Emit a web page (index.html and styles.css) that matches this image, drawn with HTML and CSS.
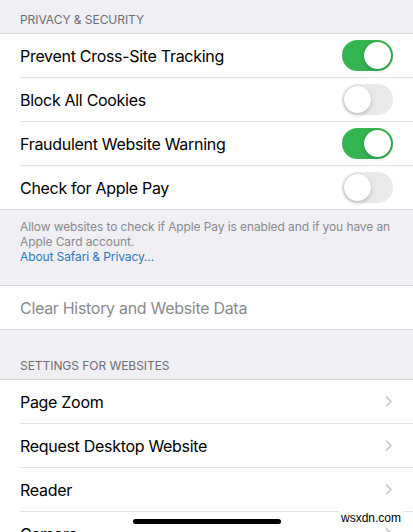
FILE: index.html
```html
<!DOCTYPE html>
<html lang="en">
<head>
<meta charset="utf-8">
<title>Safari Settings</title>
<link rel="stylesheet" href="styles.css">
</head>
<body>
<div class="screen">
  <div class="section-header first">PRIVACY &amp; SECURITY</div>
  <div class="group">
    <div class="row"><span class="label">Prevent Cross-Site Tracking</span><span class="toggle on"><span class="knob"></span></span></div>
    <div class="row"><span class="label">Block All Cookies</span><span class="toggle"><span class="knob"></span></span></div>
    <div class="row"><span class="label">Fraudulent Website Warning</span><span class="toggle on"><span class="knob"></span></span></div>
    <div class="row"><span class="label">Check for Apple Pay</span><span class="toggle"><span class="knob"></span></span></div>
  </div>
  <div class="section-footer">Allow websites to check if Apple Pay is enabled and if you have an Apple Card account.<br><span class="link">About Safari &amp; Privacy…</span></div>

  <div class="group">
    <div class="row"><span class="label disabled">Clear History and Website Data</span></div>
  </div>

  <div class="section-header">SETTINGS FOR WEBSITES</div>
  <div class="group">
    <div class="row"><span class="label">Page Zoom</span><svg class="chevron" viewBox="0 0 8 13" width="8" height="13"><path d="M1.5 2 L6 6.5 L1.5 11" fill="none" stroke="#c4c4c7" stroke-width="1.6" stroke-linecap="round" stroke-linejoin="round"/></svg></div>
    <div class="row"><span class="label">Request Desktop Website</span><svg class="chevron" viewBox="0 0 8 13" width="8" height="13"><path d="M1.5 2 L6 6.5 L1.5 11" fill="none" stroke="#c4c4c7" stroke-width="1.6" stroke-linecap="round" stroke-linejoin="round"/></svg></div>
    <div class="row"><span class="label">Reader</span><svg class="chevron" viewBox="0 0 8 13" width="8" height="13"><path d="M1.5 2 L6 6.5 L1.5 11" fill="none" stroke="#c4c4c7" stroke-width="1.6" stroke-linecap="round" stroke-linejoin="round"/></svg></div>
    <div class="row"><span class="label">Camera</span><svg class="chevron" viewBox="0 0 8 13" width="8" height="13"><path d="M1.5 2 L6 6.5 L1.5 11" fill="none" stroke="#c4c4c7" stroke-width="1.6" stroke-linecap="round" stroke-linejoin="round"/></svg></div>
  </div>

  <div class="home-indicator"></div>
  <div class="watermark">wsxdn.com</div>
</div>
</body>
</html>
```

FILE: styles.css
```css
html, body {
  margin: 0;
  padding: 0;
  background: #efeff4;
}
body {
  font-family: Inter, "Liberation Sans", sans-serif;
  -webkit-font-smoothing: antialiased;
}
.screen {
  width: 413px;
  height: 532px;
  overflow: hidden;
  position: relative;
  background: #efeff4;
}
.section-header {
  height: 20px;
  padding: 0 20px;
  font-size: 12px;
  line-height: 14px;
  color: #6d6d72;
  letter-spacing: -0.05px;
  padding-top: 29px;
  box-sizing: content-box;
}
.section-header.first {
  padding-top: 13px;
}
.group {
  background: #fff;
  border-top: 1px solid #d9d9dd;
  border-bottom: 1px solid #d9d9dd;
}
.row {
  height: 43px;
  margin-left: 20px;
  padding-right: 20px;
  display: flex;
  align-items: center;
  justify-content: space-between;
  border-bottom: 1px solid #e2e2e5;
}
.row:last-child {
  border-bottom: none;
  height: 43px;
}
.label {
  font-size: 16px;
  color: #000;
  letter-spacing: -0.3px;
}
.label.disabled {
  color: #8a8a8e;
}
.toggle {
  width: 51px;
  height: 31px;
  border-radius: 16px;
  background: #e9e9eb;
  position: relative;
  flex: none;
}
.toggle.on {
  background: #35b552;
}
.knob {
  position: absolute;
  top: 2px;
  left: 2px;
  width: 27px;
  height: 27px;
  border-radius: 50%;
  background: #fff;
  box-shadow: 0 2px 4px rgba(0,0,0,0.18), 0 0 1px rgba(0,0,0,0.15);
}
.toggle.on .knob {
  left: 22px;
}
.chevron {
  flex: none;
  margin-right: 0;
}
.section-footer {
  padding: 9px 20px 21px;
  font-size: 12px;
  line-height: 15px;
  letter-spacing: -0.1px;
  color: #8a8a8e;
}
.link {
  color: #2d78bc;
}
.home-indicator {
  position: absolute;
  left: 133px;
  top: 519px;
  width: 148px;
  height: 5px;
  border-radius: 3px;
  background: #000;
}
.watermark {
  position: absolute;
  left: 339px;
  top: 511px;
  padding: 0 2px;
  background: #fff;
  font-family: "Liberation Sans", sans-serif;
  font-size: 12px;
  line-height: 15px;
  color: #000;
}
```
